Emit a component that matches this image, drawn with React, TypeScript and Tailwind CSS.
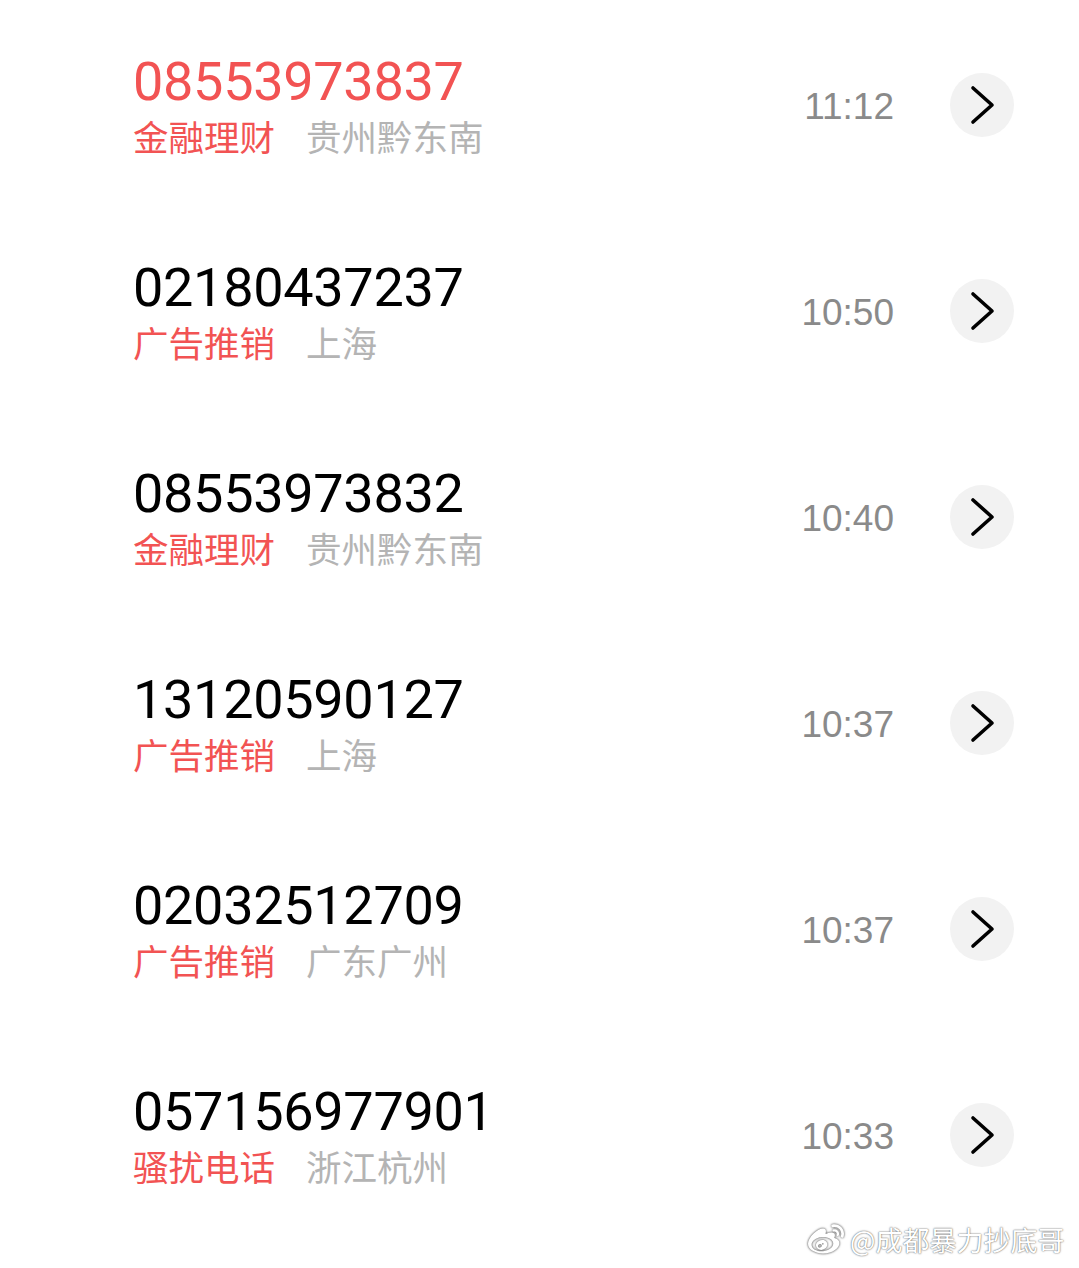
import React from "react";
import { FaWeibo } from "react-icons/fa";

const rows = [
  { num: "08553973837", cat: "金融理财", loc: "贵州黔东南", time: "11:12", red: true },
  { num: "02180437237", cat: "广告推销", loc: "上海", time: "10:50" },
  { num: "08553973832", cat: "金融理财", loc: "贵州黔东南", time: "10:40" },
  { num: "13120590127", cat: "广告推销", loc: "上海", time: "10:37" },
  { num: "02032512709", cat: "广告推销", loc: "广东广州", time: "10:37" },
  { num: "057156977901", cat: "骚扰电话", loc: "浙江杭州", time: "10:33" },
];

export default function App() {
  return (
    <div className="relative w-[1079px] h-[1268px] bg-white overflow-hidden">
      {rows.map((r, i) => (
        <div key={i} className="h-[206px] flex items-center pl-[133px] pr-[65px]">
          <div className="flex flex-col">
            <div
              className={`text-[54px] leading-[60px] tracking-[-0.3px] ${r.red ? "text-[#f25353]" : "text-black"}`}
              style={{ fontFamily: 'Roboto, "Liberation Sans", Arial, sans-serif' }}
            >
              {r.num}
            </div>
            <div
              className="mt-[6px] flex text-[35.5px] leading-[36px]"
              style={{ fontFamily: '"Noto Sans CJK SC", sans-serif' }}
            >
              <span className="text-[#f25353]">{r.cat}</span>
              <span className="ml-[31px] text-[#b4b4b4]">{r.loc}</span>
            </div>
          </div>
          <div
            className="ml-auto mt-[7px] text-[37px] leading-[40px] text-[#8a8a8a]"
            style={{ fontFamily: '"Liberation Sans", Arial, sans-serif' }}
          >
            {r.time}
          </div>
          <div className="ml-[56px] mt-[4px] w-[64px] h-[64px] rounded-full bg-[#f2f2f2] flex items-center justify-center">
            <svg width="64" height="64" viewBox="0 0 64 64" fill="none">
              <path
                d="M23 15 L42 32 L23 49"
                stroke="#000"
                strokeWidth="3.6"
                strokeLinecap="round"
                strokeLinejoin="round"
              />
            </svg>
          </div>
        </div>
      ))}
      <div className="absolute left-[806px] top-[1222px] flex items-center">
        <FaWeibo
          className="w-[40px] h-[36px] text-white"
          style={{ filter: "drop-shadow(0 0 1px rgba(0,0,0,0.55)) drop-shadow(0 0 1px rgba(0,0,0,0.3))" }}
        />
        <span
          className="ml-[4px] text-[27px] leading-[36px] text-white"
          style={{
            fontFamily: '"Noto Sans CJK SC", sans-serif',
            textShadow: "0 0 2px rgba(0,0,0,0.55), 0 0 1px rgba(0,0,0,0.4)",
          }}
        >
          @成都暴力抄底哥
        </span>
      </div>
    </div>
  );
}
